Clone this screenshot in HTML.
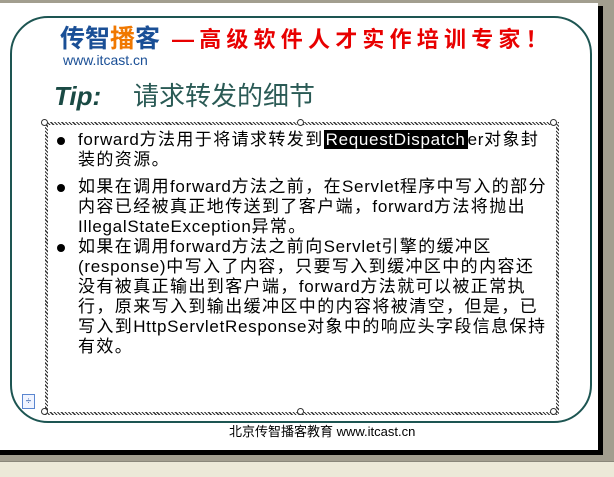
<!DOCTYPE html>
<html><head><meta charset="utf-8"><style>
*{margin:0;padding:0}
body{width:614px;height:476px;overflow:hidden;background:#a29e8f;position:relative;font-family:"Liberation Sans","Noto Sans CJK SC",sans-serif}
.abs{position:absolute;white-space:nowrap}
#slide{position:absolute;left:0;top:3px;width:598px;height:447px;background:#fff}
#shadowR{position:absolute;left:598px;top:6px;width:5px;height:449px;background:#000}
#shadowB{position:absolute;left:0;top:450px;width:603px;height:5px;background:#000}
#tb{position:absolute;left:0;top:461px;width:614px;height:15px;background:#ece9d8;border-top:1px solid #8a877a}
#rr{position:absolute;left:10px;top:16px;width:578px;height:403px;border:2px solid #1d5552;border-radius:38px}
#box{position:absolute;left:45px;top:122px;width:508px;height:287px;border:3px solid transparent;
background:repeating-linear-gradient(45deg,#333 0 1.2px,#fff 1.2px 2.6px) border-box;}
#boxin{position:absolute;left:48px;top:125px;width:508px;height:287px;background:#fff}
.h{width:5px;height:5px;border:1px solid #333;border-radius:50%;background:#fff;position:absolute}
.t{font-size:17px;line-height:20px;color:#000;letter-spacing:1.4px}
.t i{font-style:normal;letter-spacing:0.7px}
.b{position:absolute;width:8px;height:8px;border-radius:50%;background:#000;left:57px}
</style></head><body>
<div id="slide"></div><div id="shadowR"></div><div id="shadowB"></div>
<div id="tb"></div>
<div id="rr"></div>
<div id="box"></div><div id="boxin"></div>
<div class="h" style="left:41px;top:119px"></div><div class="h" style="left:297px;top:119px"></div><div class="h" style="left:550px;top:119px"></div>
<div class="h" style="left:41px;top:408px"></div><div class="h" style="left:297px;top:408px"></div><div class="h" style="left:550px;top:408px"></div>
<div class="abs" style="left:22px;top:394px;width:11px;height:13px;border:1px solid #5a86d0;background:#f0f4ff;font-size:10px;line-height:13px;text-align:center;color:#2050a0">÷</div>

<div class="abs" style="left:60px;top:24px;font-size:25px;font-weight:bold;color:#1a4f96;line-height:30px">传智<span style="color:#f07800">播</span>客</div>
<div class="abs" style="left:63px;top:52px;font-size:14px;color:#1a4f96">www.itcast.cn</div>
<div class="abs" style="left:172px;top:26px;font-size:22px;font-weight:bold;color:#e80000;letter-spacing:5.2px;line-height:28px">—高级软件人才实作培训专家！</div>
<div class="abs" style="left:54px;top:80px;font-size:26px;font-weight:bold;font-style:italic;color:#1a4a44;line-height:32px">Tip:</div>
<div class="abs" style="left:133px;top:80px;font-size:26px;color:#2a5a55;line-height:32px">请求转发的细节</div>

<div class="b" style="top:137px"></div><div class="b" style="top:184px"></div><div class="b" style="top:244px"></div>
<div class="abs t" style="left:78px;top:130px"><i>forward</i>方法用于将请求转发到<i style="background:#000;color:#fff;padding:0 2px">RequestDispatch</i><i>er</i>对象封</div>
<div class="abs t" style="left:78px;top:150px">装的资源。</div>
<div class="abs t" style="left:78px;top:177px">如果在调用<i>forward</i>方法之前，在<i>Servlet</i>程序中写入的部分</div>
<div class="abs t" style="left:78px;top:197px">内容已经被真正地传送到了客户端，<i>forward</i>方法将抛出</div>
<div class="abs t" style="left:78px;top:217px"><i>IllegalStateException</i>异常。</div>
<div class="abs t" style="left:78px;top:237px">如果在调用<i>forward</i>方法之前向<i>Servlet</i>引擎的缓冲区</div>
<div class="abs t" style="left:78px;top:257px"><i>(response)</i>中写入了内容，只要写入到缓冲区中的内容还</div>
<div class="abs t" style="left:78px;top:277px">没有被真正输出到客户端，<i>forward</i>方法就可以被正常执</div>
<div class="abs t" style="left:78px;top:297px">行，原来写入到输出缓冲区中的内容将被清空，但是，已</div>
<div class="abs t" style="left:78px;top:317px">写入到<i>HttpServletResponse</i>对象中的响应头字段信息保持</div>
<div class="abs t" style="left:78px;top:337px">有效。</div>

<div class="abs" style="left:229px;top:424px;font-size:13px;color:#000;line-height:16px">北京传智播客教育 www.itcast.cn</div>
</body></html>
